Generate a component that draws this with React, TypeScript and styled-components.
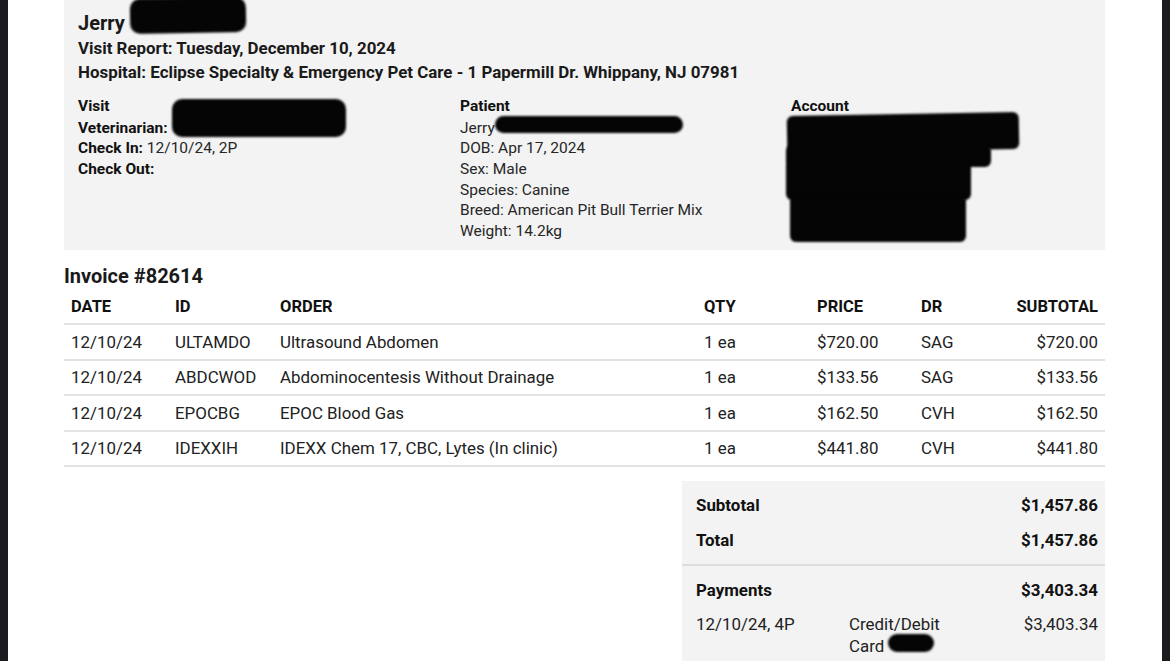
import * as React from "react";
import styled, { createGlobalStyle } from "styled-components";

const GlobalStyle = createGlobalStyle`
  html, body {
    margin: 0;
    padding: 0;
    background: #1c1c20;
  }
  body {
    font-family: Roboto, "Noto Sans", Arial, sans-serif;
    color: #1a1a1a;
  }
`;

const Page = styled.div`
  margin: 0 8px;
  background: #fff;
  height: 661px;
  overflow: hidden;
  padding: 0 57px 0 56px;
`;

const HeaderBox = styled.div`
  background: #f3f3f3;
  padding: 9px 14px 8px 14px;
  height: 250px;
  box-sizing: border-box;
`;

const PetName = styled.div`
  font-size: 20px;
  font-weight: 700;
  line-height: 28px;
`;

const HeadLine = styled.div`
  font-size: 16.9px;
  font-weight: 700;
  line-height: 23.5px;
`;

const InfoGrid = styled.div`
  display: grid;
  grid-template-columns: 382px 331px 1fr;
  margin-top: 12px;
`;

const InfoCol = styled.div`
  font-size: 15.5px;
  line-height: 20.8px;
  color: #262626;
`;

const Label = styled.div`
  font-weight: 700;
  color: #111;
`;

const Strong = styled.span`
  font-weight: 700;
  color: #111;
`;

const Redact = styled.span<{ $w: number; $h: number; $top: number; $rot?: number }>`
  position: relative;
  display: inline-block;
  width: ${(p) => p.$w}px;
  height: 1em;
  vertical-align: baseline;
  &::after {
    content: "";
    position: absolute;
    left: 0;
    top: ${(p) => p.$top}px;
    width: ${(p) => p.$w}px;
    height: ${(p) => p.$h}px;
    background: #050505;
    border-radius: ${(p) => Math.min(p.$h / 2, 10)}px;
    transform: rotate(${(p) => p.$rot || 0}deg);
    filter: blur(1px);
  }
`;

const AccountArea = styled.div`
  position: relative;
  height: 126px;
`;

const Blob = styled.div<{ $x: number; $y: number; $w: number; $h: number; $r?: number }>`
  position: absolute;
  left: ${(p) => p.$x}px;
  top: ${(p) => p.$y}px;
  width: ${(p) => p.$w}px;
  height: ${(p) => p.$h}px;
  background: #050505;
  border-radius: 6px;
  transform: rotate(${(p) => p.$r || 0}deg);
  filter: blur(1.2px);
`;

const InvoiceTitle = styled.div`
  font-size: 20px;
  font-weight: 700;
  line-height: 24px;
  margin-top: 14px;
`;

const Table = styled.table`
  width: 100%;
  border-collapse: collapse;
  table-layout: fixed;
  font-size: 16.9px;
  margin-top: 1px;
`;

const Th = styled.th<{ $right?: boolean }>`
  text-align: ${(p) => (p.$right ? "right" : "left")};
  font-weight: 700;
  font-size: 16.5px;
  padding: 0 7px;
  height: 34px;
  border-bottom: 2px solid #e3e3e3;
  color: #111;
`;

const Td = styled.td<{ $right?: boolean }>`
  text-align: ${(p) => (p.$right ? "right" : "left")};
  padding: 0 7px;
  height: 33.5px;
  border-bottom: 2px solid #e3e3e3;
  color: #222;
`;

const TotalsBox = styled.div`
  width: 423px;
  margin-left: auto;
  margin-top: 14px;
  background: #f3f3f3;
  padding: 7px 7px 0 14px;
  box-sizing: border-box;
  height: 200px;
`;

const TotalRow = styled.div`
  display: flex;
  justify-content: space-between;
  font-size: 16.9px;
  font-weight: 700;
  line-height: 35px;
  color: #111;
`;

const Divider = styled.div`
  height: 2px;
  background: #dddddd;
  margin: 6px -7px 7px -14px;
`;

const PaymentRow = styled.div`
  display: grid;
  grid-template-columns: 153px 1fr auto;
  font-size: 16.9px;
  line-height: 19.5px;
  color: #222;
  padding-top: 7px;
`;

const items = [
  ["12/10/24", "ULTAMDO", "Ultrasound Abdomen", "1 ea", "$720.00", "SAG", "$720.00"],
  ["12/10/24", "ABDCWOD", "Abdominocentesis Without Drainage", "1 ea", "$133.56", "SAG", "$133.56"],
  ["12/10/24", "EPOCBG", "EPOC Blood Gas", "1 ea", "$162.50", "CVH", "$162.50"],
  ["12/10/24", "IDEXXIH", "IDEXX Chem 17, CBC, Lytes (In clinic)", "1 ea", "$441.80", "CVH", "$441.80"],
];

export default function App() {
  return (
    <>
      <GlobalStyle />
      <Page>
        <HeaderBox>
          <PetName>
            Jerry <Redact $w={116} $h={35} $top={-12} $rot={-1} />
          </PetName>
          <HeadLine>Visit Report: Tuesday, December 10, 2024</HeadLine>
          <HeadLine>Hospital: Eclipse Specialty &amp; Emergency Pet Care - 1 Papermill Dr. Whippany, NJ 07981</HeadLine>
          <InfoGrid>
            <InfoCol>
              <Label>Visit</Label>
              <div>
                <Strong>Veterinarian:</Strong> <Redact $w={174} $h={38} $top={-18} />
              </div>
              <div>
                <Strong>Check In:</Strong> 12/10/24, 2P
              </div>
              <div>
                <Strong>Check Out:</Strong>
              </div>
            </InfoCol>
            <InfoCol>
              <Label>Patient</Label>
              <div>
                Jerry<Redact $w={188} $h={17} $top={-1} />
              </div>
              <div>DOB: Apr 17, 2024</div>
              <div>Sex: Male</div>
              <div>Species: Canine</div>
              <div>Breed: American Pit Bull Terrier Mix</div>
              <div>Weight: 14.2kg</div>
            </InfoCol>
            <InfoCol>
              <Label>Account</Label>
              <AccountArea>
                <Blob $x={-4} $y={-3} $w={232} $h={37} $r={-1} />
                <Blob $x={-5} $y={28} $w={205} $h={22} />
                <Blob $x={-5} $y={43} $w={185} $h={40} />
                <Blob $x={-1} $y={78} $w={176} $h={47} />
              </AccountArea>
            </InfoCol>
          </InfoGrid>
        </HeaderBox>

        <InvoiceTitle>Invoice #82614</InvoiceTitle>
        <Table>
          <colgroup>
            <col style={{ width: 104 }} />
            <col style={{ width: 105 }} />
            <col style={{ width: 424 }} />
            <col style={{ width: 113 }} />
            <col style={{ width: 104 }} />
            <col style={{ width: 90 }} />
            <col />
          </colgroup>
          <thead>
            <tr>
              <Th>DATE</Th>
              <Th>ID</Th>
              <Th>ORDER</Th>
              <Th>QTY</Th>
              <Th>PRICE</Th>
              <Th>DR</Th>
              <Th $right>SUBTOTAL</Th>
            </tr>
          </thead>
          <tbody>
            {items.map((row) => (
              <tr key={row[1]}>
                {row.map((cell, i) => (
                  <Td key={i} $right={i === 6}>
                    {cell}
                  </Td>
                ))}
              </tr>
            ))}
          </tbody>
        </Table>

        <TotalsBox>
          <TotalRow>
            <span>Subtotal</span>
            <span>$1,457.86</span>
          </TotalRow>
          <TotalRow>
            <span>Total</span>
            <span>$1,457.86</span>
          </TotalRow>
          <Divider />
          <TotalRow>
            <span>Payments</span>
            <span>$3,403.34</span>
          </TotalRow>
          <PaymentRow>
            <span>12/10/24, 4P</span>
            <span>
              Credit/Debit
              <br />
              Card <Redact $w={46} $h={18} $top={-1} />
            </span>
            <span>$3,403.34</span>
          </PaymentRow>
        </TotalsBox>
      </Page>
    </>
  );
}
